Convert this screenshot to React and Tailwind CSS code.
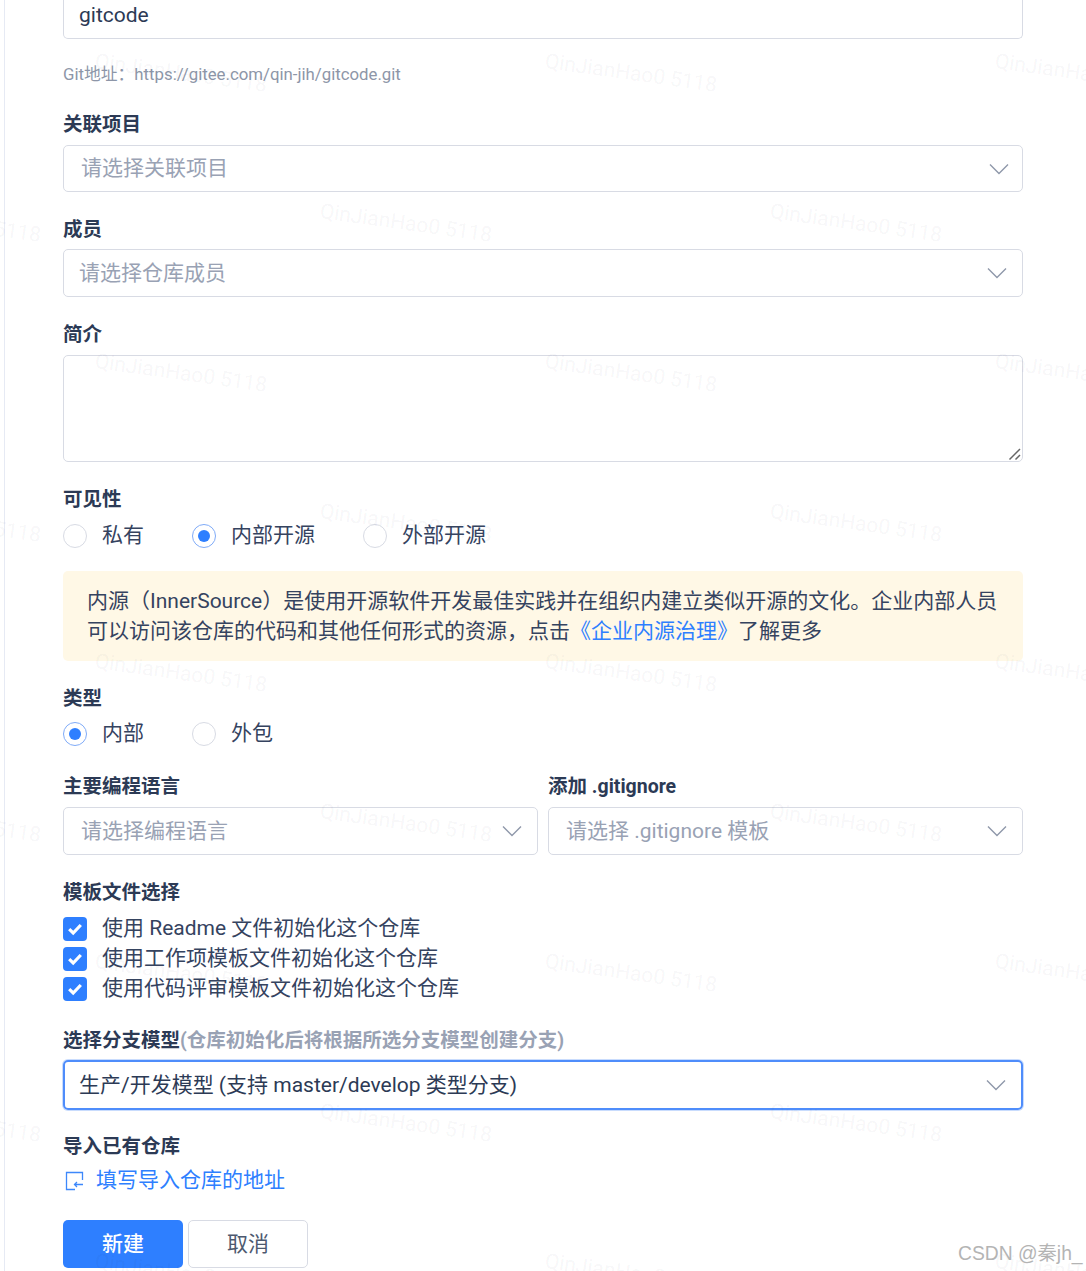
import React from 'react';

const marks = [
    [97, 48], [547, 48], [997, 48],
    [-129, 198], [322, 198], [772, 198],
    [97, 348], [547, 348], [997, 348],
    [-129, 498], [322, 498], [772, 498],
    [97, 648], [547, 648], [997, 648],
    [-129, 798], [322, 798], [772, 798],
    [97, 948], [547, 948], [997, 948],
    [-129, 1098], [322, 1098], [772, 1098],
    [97, 1248], [547, 1248], [997, 1248],
];

const Label = ({ children, className = '' }) => (
    <div className={`h-6 leading-6 text-[19.5px] font-bold text-[#2c3a55] ${className}`}>{children}</div>
);

const Chevron = () => (
    <svg width="20" height="12" viewBox="0 0 20 12" fill="none" className="shrink-0">
        <path d="M1 1.5L10 10.5L19 1.5" stroke="#8f98aa" strokeWidth="1.4" />
    </svg>
);

const Select = ({ text, active, left = 'pl-[15px]', right = 'pr-[15px]', h = 'h-12', textClass = 'mt-[2px]', className = '' }) => (
    <div
        className={`${h} flex items-center justify-between rounded-[5px] ${left} ${right} text-[21px] ${
            active
                ? 'border-2 border-[#4f8dfb] shadow-[0_0_0_1px_#c9dcfd] text-[#2c3a55]'
                : 'border border-[#d8dbe4] text-[#99a2b4]'
        } ${className}`}
    >
        <span className={textClass}>{text}</span>
        <Chevron />
    </div>
);

const Radio = ({ label, checked, className = '' }) => (
    <div className={`flex items-center ${className}`}>
        <span
            className={`w-6 h-6 rounded-full border flex items-center justify-center ${
                checked ? 'border-[#7fabf8]' : 'border-[#d8dbe4]'
            }`}
        >
            {checked && <span className="w-3 h-3 rounded-full bg-[#2e7fff]" />}
        </span>
        <span className="ml-[15px] text-[21px] text-[#35435f]">{label}</span>
    </div>
);

const Check = ({ label }) => (
    <div className="h-[30px] flex items-center">
        <span className="w-6 h-6 rounded-[4px] bg-[#2e7fff] flex items-center justify-center">
            <svg width="16" height="14" viewBox="0 0 16 14" fill="none">
                <path d="M2.2 7.2L6.2 11L13.8 3" stroke="#fff" strokeWidth="3.2" />
            </svg>
        </span>
        <span className="ml-[15px] text-[21px] text-[#35435f]">{label}</span>
    </div>
);

const App = () => {
    return (
        <div
            className="relative w-[1086px] h-[1271px] overflow-hidden bg-white"
            style={{ fontFamily: 'Roboto, "Noto Sans CJK SC", sans-serif' }}
        >
            <div className="absolute left-1 top-0 bottom-0 w-px bg-[#e6eaf4]" />

            <div className="w-[960px] ml-[63px]">
                <div className="h-[39px] flex items-center border border-t-0 border-[#d8dbe4] rounded-b-[5px] pl-[15px] text-[21px] text-[#2c3a55]">
                    <span className="-mt-[6px]">gitcode</span>
                </div>
                <div className="mt-[23px] h-6 leading-6 text-[16.8px] text-[#8d96a8]">Git地址：https://gitee.com/qin-jih/gitcode.git</div>

                <Label className="mt-[27px]">关联项目</Label>
                <Select text="请选择关联项目" h="h-[47px]" left="pl-[17px]" right="pr-[13px]" textClass="" className="mt-2" />

                <Label className="mt-[26px]">成员</Label>
                <Select text="请选择仓库成员" className="mt-[7px]" />

                <Label className="mt-[26px]">简介</Label>
                <div className="relative mt-2">
                    <textarea className="block w-full h-[107px] resize-none border border-[#d8dbe4] rounded-[5px] outline-none bg-transparent" />
                    <svg width="14" height="14" viewBox="0 0 14 14" fill="none" className="absolute right-[1px] bottom-[1px]">
                        <path d="M1.5 12.5L12 2M7.5 12.5L12 8" stroke="#666" strokeWidth="1.5" />
                    </svg>
                </div>

                <Label className="mt-[26px]">可见性</Label>
                <div className="mt-[12px] h-6 flex">
                    <Radio label="私有" className="w-[129px]" />
                    <Radio label="内部开源" checked className="w-[171px]" />
                    <Radio label="外部开源" />
                </div>

                <div className="mt-[23px] h-[90px] rounded-[5px] bg-[#fff8e6] px-6 pt-[15px] text-[21px] leading-[30px] text-[#35435f]">
                    <div className="whitespace-nowrap">内源（InnerSource）是使用开源软件开发最佳实践并在组织内建立类似开源的文化。企业内部人员</div>
                    <div className="whitespace-nowrap">
                        可以访问该仓库的代码和其他任何形式的资源，点击<span className="text-[#2e7fff]">《企业内源治理》</span>了解更多
                    </div>
                </div>

                <Label className="mt-[26px]">类型</Label>
                <div className="mt-[11px] h-6 flex">
                    <Radio label="内部" checked className="w-[129px]" />
                    <Radio label="外包" />
                </div>

                <div className="mt-[29px] grid grid-cols-2 gap-x-[10px]">
                    <div>
                        <Label>主要编程语言</Label>
                        <Select text="请选择编程语言" left="pl-[17px]" className="mt-2" />
                    </div>
                    <div>
                        <Label>添加 .gitignore</Label>
                        <Select text="请选择 .gitignore 模板" left="pl-[17px]" className="mt-2" />
                    </div>
                </div>

                <Label className="mt-[26px]">模板文件选择</Label>
                <div className="mt-[9px]">
                    <Check label="使用 Readme 文件初始化这个仓库" />
                    <Check label="使用工作项模板文件初始化这个仓库" />
                    <Check label="使用代码评审模板文件初始化这个仓库" />
                </div>

                <Label className="mt-[25px]">
                    选择分支模型<span className="text-[#99a2b4]">(仓库初始化后将根据所选分支模型创建分支)</span>
                </Label>
                <Select text="生产/开发模型 (支持 master/develop 类型分支)" active h="h-[50px]" left="pl-[14px]" right="pr-[15px]" className="mt-[7px]" />

                <Label className="mt-[25px]">导入已有仓库</Label>
                <div className="mt-[10px] h-6 flex items-center text-[21px] text-[#2e7fff]">
                    <svg width="20" height="20" viewBox="0 0 20 20" fill="none" className="ml-[2px] shrink-0">
                        <path d="M17.5 9V1.5H1.5V18.5H10" stroke="#3d88fb" strokeWidth="1.3" />
                        <path d="M18 13.5H9.5M12 11L9.5 13.5L12 16" stroke="#3d88fb" strokeWidth="1.3" />
                    </svg>
                    <span className="ml-[11px]">填写导入仓库的地址</span>
                </div>

                <div className="mt-[27px] flex gap-[5px]">
                    <button className="w-[120px] h-12 pt-[2px] rounded-[5px] bg-[#2e7fff] text-white text-[21px] font-medium">新建</button>
                    <button className="w-[120px] h-12 pt-[2px] rounded-[5px] border border-[#d8dbe4] text-[#4d596f] text-[21px]">取消</button>
                </div>
            </div>

            {marks.map(([x, y], i) => (
                <div
                    key={i}
                    className="absolute pointer-events-none whitespace-nowrap origin-top-left rotate-[8deg] text-[21px] leading-[26px] text-[#2c3a55]/[0.05]"
                    style={{ left: x, top: y }}
                >
                    QinJianHao0 5118
                </div>
            ))}

            <div className="absolute left-[958px] top-[1242px] whitespace-nowrap text-[19.3px] leading-6 text-[#b4b4b4]" style={{ fontFamily: '"Liberation Sans", "Noto Sans CJK SC", sans-serif' }}>
                CSDN @秦jh_
            </div>
        </div>
    );
};

export default App;
